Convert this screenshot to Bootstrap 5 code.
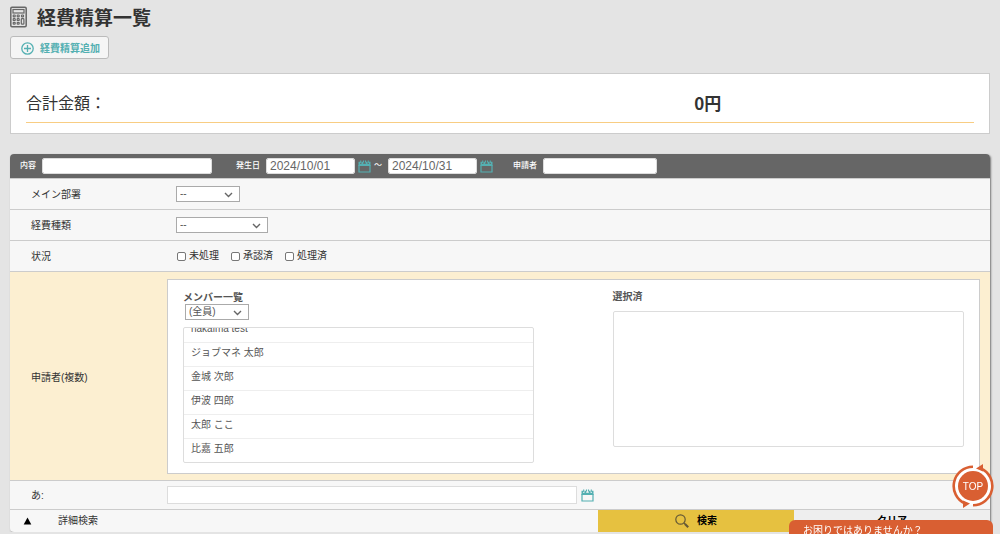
<!DOCTYPE html>
<html lang="ja">
<head>
<meta charset="utf-8">
<meta name="viewport" content="width=device-width, initial-scale=1">
<title>経費精算一覧</title>
<link href="https://cdn.jsdelivr.net/npm/bootstrap@5.3.0/dist/css/bootstrap.min.css" rel="stylesheet">
<style>
  body { background: #e4e4e4; color: #333; font-family: "Liberation Sans", "Noto Sans CJK JP", sans-serif; font-size: 10px; line-height: 16px; padding: 6px 10px 0; }
  svg { display: block; flex: none; }
  .page-title { font-size: 19px; line-height: 18px; font-weight: 700; padding-top: 4px; margin-left: 10px; }
  .btn-add { background: #f5f5f5; border: 1px solid #bbb; border-radius: 3px; color: #54b0b2; font-size: 10px; font-weight: 700; line-height: 15px; padding: 4px 8px 2px 10px; gap: 6px; }
  .btn-add:hover { background: #fff; color: #54b0b2; }
  .total-box { background: #fff; border: 1px solid #ccc; margin-top: 14px; padding: 16px 15px 10px; }
  .total-line { border-bottom: 1px solid #f8cd83; line-height: 28px; padding-bottom: 4px; }
  .total-name { font-size: 16px; width: 70.5%; }
  .total-sum { font-size: 17px; line-height: 26px; font-weight: 700; font-family: "Noto Sans CJK JP", sans-serif; }
  .search-panel { margin-top: 20px; border-radius: 4px; background: #f7f7f7; box-shadow: 1px 1px 2px #777; overflow: hidden; }
  .search-head { background: #666; color: #fff; height: 25px; font-size: 8px; font-weight: 500; padding: 0 10px; border-bottom: 1px solid #ccc; }
  .search-head .head-field { gap: 6px; margin-right: 24px; }
  .search-head .head-dates { margin-right: 20px; }
  .search-head .date-field { gap: 3px; }
  .search-head .form-control { height: 16px; min-height: 0; border: 1px solid #ddd; border-radius: 2px; padding: 0 3px; font-size: 12px; line-height: 14px; color: #666; }
  .search-head .w-content { width: 170px; }
  .search-head .w-date { width: 89px; }
  .search-head .w-person { width: 114px; }
  .icon-btn { background: none; border: 0; padding: 0; color: #54b0b2; }
  .search-row { border-bottom: 1px solid #ccc; min-height: 31px; padding-right: 10px; }
  .row-name { width: 157px; padding: 2px 0 0 21px; flex: none; }
  .row-body { padding-left: 9px; }
  .form-select { width: 64px; height: 16px; min-height: 0; border: 1px solid #aaa; border-radius: 0; padding: 0 3px; font-size: 10px; line-height: 14px; color: #555; background-color: #fff; background-position: right 6px center; background-size: 9px 9px; background-image: url("data:image/svg+xml,%3Csvg xmlns='http://www.w3.org/2000/svg' viewBox='0 0 9 9'%3E%3Cpath d='M1 3l3.500 3.500L8 3' fill='none' stroke='%23666' stroke-width='1.400'/%3E%3C/svg%3E"); }
  .form-select.kind { width: 92px; }
  .check-set { gap: 12px; padding-left: 10px; }
  .form-check { min-height: 0; margin: 0; padding: 0; gap: 3px; }
  .form-check .form-check-input { float: none; margin: 1px 0 0; width: 9px; height: 9px; border: 1px solid #777; border-radius: 2px; }
  .row-members { background: #fcefd1; padding-top: 7px; padding-bottom: 6px; }
  .picker { background: #fff; border: 1px solid #ccc; padding: 9px 15px 10px; }
  .picker-col { width: 45%; color: #555; }
  .picker-col .form-select { margin: 1px 0 7px 2px; }
  .picker-list { border: 1px solid #ddd; border-radius: 2px; height: 136px; overflow: hidden; }
  .picker-list.chosen { margin-top: 6px; }
  .picker-list li { flex: none; height: 24px; line-height: 20px; padding-left: 7px; border-top: 1px solid #eee; }
  .row-extra { min-height: 29px; }
  .row-extra .form-control { width: 410px; height: 18px; min-height: 0; border: 1px solid #ddd; border-radius: 0; padding: 0 3px; font-size: 10px; }
  .search-foot { min-height: 22px; }
  .search-foot .btn { width: 20%; border: 0; border-radius: 0; padding: 0; font-size: 10px; line-height: 16px; font-weight: 700; color: #000; }
  .btn-search, .btn-search:hover { background: #e6c140; }
  .btn-clear, .btn-clear:hover { background: #eee; }
  .btn-toggle { background: none; border: 0; padding: 0 0 0 13px; color: #333; gap: 26px; }
  .to-top { position: fixed; right: 6px; bottom: 26px; }
  .help-tab { position: fixed; right: 7px; bottom: 0; width: 204px; height: 14px; background: #d95f32; color: #fff; border: 0; border-radius: 6px 6px 0 0; padding: 2px 14px 0; line-height: 18px; text-align: left; white-space: nowrap; }
</style>
</head>
<body>
<svg class="d-none" xmlns="http://www.w3.org/2000/svg">
  <symbol id="calendar" viewBox="0 0 13 13">
    <path d="M1 5.500h11v6.500H1z" fill="none" stroke="currentColor" stroke-width="1.200"/>
    <path d="M.5 1.800h1.500v2h1.500v-2h1.700v2h2.600v-2h1.700v2h1.500v-2h1.500V6H.5z" fill="currentColor"/>
    <path d="M2.700.5v2.500M5.500.5v2M7.500.5v2M10.300.5v2.500" stroke="currentColor" stroke-width="1.100"/>
  </symbol>
</svg>

<header>
  <div class="d-flex align-items-center">
    <svg width="17" height="22" viewBox="0 0 17 21" fill="none" stroke="#666">
      <rect x=".8" y=".8" width="15.400" height="19.400" rx="1.200" stroke-width="1.500"/>
      <rect x="3" y="3" width="11" height="3.500" stroke-width="1.200"/>
      <g stroke-width="1.200"><rect x="3.200" y="8.500" width="2" height="1.800" rx=".6"/><rect x="7.200" y="8.500" width="2" height="1.800" rx=".6"/><rect x="11.500" y="8.500" width="2" height="1.800" rx=".6"/><rect x="3.200" y="12.200" width="2" height="1.800" rx=".6"/><rect x="7.200" y="12.200" width="2" height="1.800" rx=".6"/><rect x="3.200" y="15.900" width="2" height="1.800" rx=".6"/><rect x="7.200" y="15.900" width="2" height="1.800" rx=".6"/><rect x="11.300" y="12.200" width="2.600" height="5.500" rx=".8"/></g>
    </svg>
    <h1 class="page-title mb-0">経費精算一覧</h1>
  </div>
  <button type="button" class="btn btn-add d-inline-flex align-items-center mt-2">
    <svg width="13" height="13" viewBox="0 0 13 13" fill="none" stroke="currentColor" stroke-width="1.300"><circle cx="6.500" cy="6.500" r="5.700"/><path d="M6.500 3v7M3 6.500h7"/></svg>
    経費精算追加
  </button>
</header>

<section class="total-box">
  <div class="total-line d-flex">
    <div class="total-name">合計金額：</div>
    <div class="total-sum">0円</div>
  </div>
</section>

<form class="search-panel">
  <div class="search-head d-flex align-items-center">
    <div class="head-field d-flex align-items-center">
      <label for="content">内容</label>
      <input id="content" type="text" class="form-control w-content">
    </div>
    <div class="head-field head-dates d-flex align-items-center">
      <label for="from">発生日</label>
      <div class="date-field d-flex align-items-center">
        <input id="from" type="text" class="form-control w-date" value="2024/10/01">
        <button type="button" class="icon-btn" aria-label="開始日を選択"><svg width="13" height="13"><use href="#calendar"/></svg></button>
        <span>～</span>
      </div>
      <div class="date-field d-flex align-items-center">
        <input type="text" class="form-control w-date" value="2024/10/31" aria-label="終了日">
        <button type="button" class="icon-btn" aria-label="終了日を選択"><svg width="13" height="13"><use href="#calendar"/></svg></button>
      </div>
    </div>
    <div class="head-field d-flex align-items-center">
      <label for="person">申請者</label>
      <input id="person" type="text" class="form-control w-person">
    </div>
  </div>

  <div class="search-row d-flex align-items-center">
    <label for="dept" class="row-name">メイン部署</label>
    <div class="row-body"><select id="dept" class="form-select"><option>--</option></select></div>
  </div>
  <div class="search-row d-flex align-items-center">
    <label for="kind" class="row-name">経費種類</label>
    <div class="row-body"><select id="kind" class="form-select kind"><option>--</option></select></div>
  </div>
  <div class="search-row d-flex align-items-center">
    <div class="row-name">状況</div>
    <div class="check-set d-flex">
      <div class="form-check d-flex align-items-center"><input id="s1" type="checkbox" class="form-check-input"><label for="s1">未処理</label></div>
      <div class="form-check d-flex align-items-center"><input id="s2" type="checkbox" class="form-check-input"><label for="s2">承認済</label></div>
      <div class="form-check d-flex align-items-center"><input id="s3" type="checkbox" class="form-check-input"><label for="s3">処理済</label></div>
    </div>
  </div>
  <div class="search-row row-members d-flex align-items-center">
    <div class="row-name">申請者(複数)</div>
    <div class="picker d-flex justify-content-between flex-grow-1">
      <div class="picker-col">
        <label for="group" class="d-block fw-bold lh-1 pt-1">メンバー一覧</label>
        <select id="group" class="form-select"><option>(全員)</option></select>
        <ul class="picker-list list-unstyled d-flex flex-column justify-content-end mb-0">
          <li>nakaima test</li>
          <li>ジョブマネ 太郎</li>
          <li>金城 次郎</li>
          <li>伊波 四郎</li>
          <li>太郎 ここ</li>
          <li>比嘉 五郎</li>
        </ul>
      </div>
      <div class="picker-col">
        <div class="fw-bold">選択済</div>
        <ul class="picker-list chosen list-unstyled mb-0"></ul>
      </div>
    </div>
  </div>
  <div class="search-row row-extra d-flex align-items-center">
    <label for="extra" class="row-name">あ:</label>
    <input id="extra" type="text" class="form-control">
    <button type="button" class="icon-btn ms-1" aria-label="日付を選択"><svg width="13" height="13"><use href="#calendar"/></svg></button>
  </div>
  <div class="search-foot d-flex">
    <button type="button" class="btn-toggle d-flex align-items-center flex-grow-1"><svg width="9" height="8" viewBox="0 0 9 8"><path d="M4.500.5L8.300 7.500H.7z" fill="#000"/></svg>詳細検索</button>
    <button type="submit" class="btn btn-search d-flex align-items-center justify-content-center gap-2">
      <svg width="14" height="14" viewBox="0 0 14 14" fill="none" stroke="#665a35"><circle cx="5.500" cy="5.500" r="4.700" stroke-width="1.200"/><path d="M9 9l1.500 1.500" stroke-width="1.200"/><path d="M10 10l3.200 3.200" stroke-width="2.200"/></svg>
      検索
    </button>
    <button type="reset" class="btn btn-clear">クリア</button>
  </div>
</form>

<a href="#" class="to-top" aria-label="TOP">
  <svg width="42" height="44" viewBox="0 0 42 44">
    <circle cx="21" cy="22" r="19" fill="#fff"/>
    <circle cx="21" cy="22" r="15" fill="#d95f32"/>
    <g fill="none" stroke="#d95f32" stroke-width="2.600"><path d="M21 2.800A19.200 19.200 0 0 0 13 39.500"/><path d="M21 41.200A19.200 19.200 0 0 0 29 4.500"/></g>
    <path d="M24 4.500L31 0v7.500zM18 39.500L11 44v-7.500z" fill="#d95f32"/>
    <text x="21" y="26" text-anchor="middle" font-size="10" fill="#fff">TOP</text>
  </svg>
</a>
<button type="button" class="help-tab">お困りではありませんか？</button>
<script src="https://cdn.jsdelivr.net/npm/bootstrap@5.3.0/dist/js/bootstrap.bundle.min.js"></script>
</body>
</html>
